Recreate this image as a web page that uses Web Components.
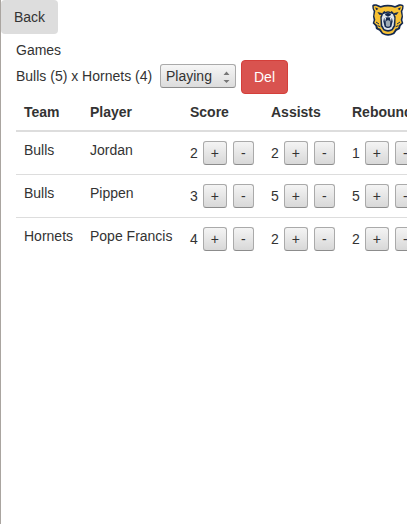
<!DOCTYPE html>
<html lang="en">
<head>
<meta charset="utf-8">
<title>Games</title>
<style>
html { background: #fff; }
body { margin: 0; overflow-x: hidden; color: #333; font: 14px/20px "Liberation Sans", Arial, sans-serif; }
</style>
</head>
<body>
<games-app></games-app>
<script>
class ShadowElement extends HTMLElement {
  render(html) {
    if (!this.shadowRoot) this.attachShadow({ mode: "open" });
    this.shadowRoot.innerHTML = html;
  }
}

class BearLogo extends ShadowElement {
  connectedCallback() {
    this.render(`
<style>:host{display:block;width:32px;height:34px} svg{display:block;width:100%;height:100%}</style>
<svg viewBox="17 9 96 102" role="img" aria-label="Bear logo">
  <path fill="#14294f" d="M18 16Q20 11 30 13L43 18Q64 11 86 18L98 13Q110 11 112 17Q112 28 108 34L110 50L108 60L111 70L103 78L101 87L91 92L84 102Q65 113 47 102L39 92L29 87L27 78L19 70L22 60L20 50L22 34Q17 27 18 16Z"/>
  <path fill="#f8c235" d="M22 19Q27 15 35 20L43 23Q65 16 86 23L95 20Q104 15 108 19Q108 28 103 33L106 48L103 59L106 68L98 75L95 84L88 86L80 98Q65 106 50 98L42 86L35 84L32 75L24 68L27 59L24 48L27 33Q21 27 22 19Z"/>
  <path fill="#14294f" d="M27 22L36 26L31 31Q27 28 27 22ZM103 22L94 26L99 31Q103 28 103 22ZM33 36L46 39L50 45L39 44ZM97 36L84 39L80 45L91 44Z"/>
  <path fill="#14294f" d="M50 36Q65 24 80 36L88 50L87 78L79 91Q65 99 51 91L43 78L42 50Z"/>
  <path fill="#f8c235" d="M54 31Q65 25 76 31L73 36Q65 32 57 36Z"/>
  <path fill="#dfe5ea" d="M50 43Q65 34 80 43L84 54L82 76L76 87Q65 93 54 87L48 76L46 54Z"/>
  <path fill="#14294f" d="M56 41Q65 37 74 41L73 46L65 50L57 46ZM53 55Q65 49 77 55L79 64L75 80Q65 88 55 80L51 64Z"/>
  <path fill="#9eabb5" d="M58 65Q65 57 72 65L71 78Q65 83 59 78Z"/>
  <path fill="#fff" d="M54 52L59 54L56 66ZM76 52L71 54L74 66Z"/>
  <path fill="none" stroke="#14294f" stroke-width="3" d="M29 66L38 72M101 66L92 72M34 77L42 80M96 77L88 80"/>
</svg>`);
  }
}

class AppBar extends ShadowElement {
  connectedCallback() {
    this.render(`
<style>
:host{display:flex;justify-content:space-between;align-items:flex-start;padding-right:3px;height:40px}
button{font:inherit;color:inherit;margin:0;padding:7px 13px;border:0;border-radius:4px;background:#ddd}
bear-logo{margin-top:3px}
</style>
<button type="button"><slot></slot></button><bear-logo></bear-logo>`);
  }
}

class StatusSelect extends ShadowElement {
  connectedCallback() {
    this.render(`
<style>
:host{display:block;position:relative}
select{display:block;appearance:none;box-sizing:border-box;width:76px;height:24px;margin:0;padding:0 16px 0 5px;font:inherit;line-height:20px;color:inherit;border:1px solid #aaa;border-bottom-color:#8c8c8c;border-radius:3px;background:linear-gradient(#f6f6f6,#dcdcdc)}
svg{position:absolute;right:6px;top:7px;width:7px;height:12px;pointer-events:none}
</style>
<select aria-label="Game status"><option>Playing</option><option>Ended</option></select>
<svg viewBox="0 0 7 12" aria-hidden="true"><path fill="#777" d="M0.5 4L3.5 0.5L6.5 4ZM0.5 9L3.5 12L6.5 9Z"/></svg>`);
  }
}

class GameSummary extends ShadowElement {
  connectedCallback() {
    this.render(`
<style>
:host{display:flex;align-items:center;gap:5px}
span{min-width:139px}
span,status-select{margin-bottom:2px}
.del{font:inherit;color:#fff;margin:0;padding:6px 12px;border:1px solid #d43f3a;border-radius:4px;background:#d9534f}
</style>
<span><slot></slot></span><status-select></status-select><button class="del" type="button">Del</button>`);
  }
}

class StatCounter extends ShadowElement {
  connectedCallback() {
    this.render(`
<style>
:host{display:flex;align-items:center;padding:1px 0}
span{margin-right:5px}
button{box-sizing:border-box;height:24px;margin:0;padding:0 7px;font:inherit;line-height:22px;color:inherit;border:1px solid #aaa;border-bottom-color:#8c8c8c;border-radius:3px;background:linear-gradient(#f4f4f4,#d8d8d8)}
.plus{width:24px;margin-right:6px}
.minus{width:21px}
</style>
<span>${this.getAttribute("value")}</span><button class="plus" type="button" aria-label="Increase ${this.getAttribute("label")}">+</button><button class="minus" type="button" aria-label="Decrease ${this.getAttribute("label")}">-</button>`);
    this.value = Number(this.getAttribute("value"));
    const out = this.shadowRoot.querySelector("span");
    this.shadowRoot.querySelector(".plus").onclick = () => { out.textContent = ++this.value; };
    this.shadowRoot.querySelector(".minus").onclick = () => { out.textContent = --this.value; };
  }
}

class PlayerStats extends ShadowElement {
  connectedCallback() {
    const stats = ["Score", "Assists", "Rebounds"];
    const rows = [["Bulls", "Jordan", 2, 2, 1], ["Bulls", "Pippen", 3, 5, 5], ["Hornets", "Pope Francis", 4, 2, 2]];
    this.render(`
<style>
:host{display:block}
table{border-collapse:separate;border-spacing:0;white-space:nowrap}
th,td{box-sizing:border-box;min-width:81px;padding:8px;text-align:left;vertical-align:top}
th:nth-child(1){min-width:66px}
td:nth-child(1){min-width:66px}
th:nth-child(2){min-width:100px}
th{border-bottom:2px solid #ddd}
tr + tr td{border-top:1px solid #ddd}
</style>
<table><thead><tr>${["Team", "Player", ...stats].map(h => `<th scope="col">${h}</th>`).join("")}</tr></thead>
<tbody>${rows.map(([team, player, ...values]) => `<tr><td>${team}</td><td>${player}</td>${values.map((v, i) => `<td><stat-counter value="${v}" label="${player} ${stats[i]}"></stat-counter></td>`).join("")}</tr>`).join("")}</tbody></table>`);
  }
}

class GamesApp extends ShadowElement {
  connectedCallback() {
    this.render(`
<style>
:host{display:block;box-sizing:border-box;min-height:100vh;border-left:1px solid #aaa5a0;overflow:hidden}
main{padding:0 15px}
h1{margin:0;font:inherit}
</style>
<app-bar>Back</app-bar>
<main><h1>Games</h1><game-summary>Bulls (5) x Hornets (4)</game-summary><player-stats></player-stats></main>`);
  }
}

customElements.define("bear-logo", BearLogo);
customElements.define("app-bar", AppBar);
customElements.define("status-select", StatusSelect);
customElements.define("game-summary", GameSummary);
customElements.define("stat-counter", StatCounter);
customElements.define("player-stats", PlayerStats);
customElements.define("games-app", GamesApp);
</script>
</body>
</html>
